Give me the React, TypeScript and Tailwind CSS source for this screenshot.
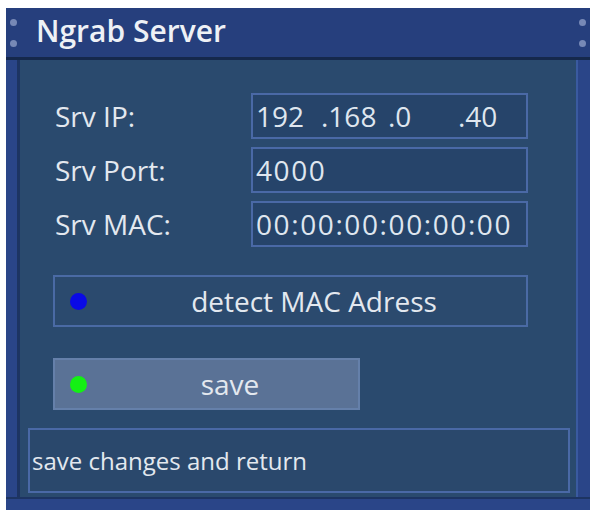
const font = { fontFamily: '"Open Sans", "DejaVu Sans", sans-serif' };

const TitleDots = () => (
  <div className="flex flex-col gap-[14px]">
    <span className="block w-[7px] h-[7px] rounded-full bg-[#8c9cc4] opacity-80" />
    <span className="block w-[7px] h-[7px] rounded-full bg-[#8c9cc4] opacity-80" />
  </div>
);

const Field = ({ children }: { children: React.ReactNode }) => (
  <div className="w-[277px] h-[46px] border-2 border-[#4a69a6] bg-[#26446a] flex items-center pl-[3px] text-[28px] tracking-[1.6px] text-[#dfe6ef] leading-none">
    {children}
  </div>
);

const ColorButton = ({
  dot,
  label,
  className,
}: {
  dot: string;
  label: string;
  className: string;
}) => (
  <div className={`h-[52px] ml-[33px] border-2 flex items-center ${className}`}>
    <span className={`ml-[15px] w-[17px] h-[17px] rounded-full ${dot}`} />
    <span className="flex-1 text-center pl-[15px] text-[28px] leading-none text-[#e3e8ef]">
      {label}
    </span>
  </div>
);

export default function App() {
  const rows = [
    { label: 'Srv IP:', value: null },
    { label: 'Srv Port:', value: '4000' },
    { label: 'Srv MAC:', value: '00:00:00:00:00:00' },
  ];

  return (
    <div className="w-[593px] h-[515px] bg-white pt-[8px] pl-[6px] font-medium" style={font}>
      <div className="w-[584px] h-[502px] bg-[#2a4588] flex flex-col">
        {/* title bar */}
        <div className="h-[49px] bg-[#263f7d] flex items-center px-[4px]">
          <TitleDots />
          <span className="ml-[19px] text-[30px] font-semibold leading-none text-[#eef1f6] pb-[4px]">
            Ngrab Server
          </span>
          <div className="flex-1" />
          <TitleDots />
        </div>
        <div className="h-[3px] bg-[#15284c]" />

        <div className="flex h-[437px]">
          <div className="w-[14px] bg-[#2a4588] border-r-[3px] border-[#1d3462]" />
          <div className="w-[556px] bg-[#2a4a6e] flex flex-col pt-[33px]">
            <div className="flex flex-col gap-[8px]">
              {rows.map((row) => (
                <div key={row.label} className="flex items-center">
                  <span className="ml-[35px] w-[196px] text-[28px] leading-none text-[#e3e8ef]">
                    {row.label}
                  </span>
                  <Field>
                    {row.value ?? (
                      <>
                        <span className="inline-block w-[65px] tracking-normal">192</span>
                        <span className="inline-block w-[67px] tracking-normal">.168</span>
                        <span className="inline-block w-[70px] tracking-normal">.0</span>
                        <span className="inline-block tracking-normal">.40</span>
                      </>
                    )}
                  </Field>
                </div>
              ))}
            </div>

            <div className="mt-[28px]">
              <ColorButton
                dot="bg-[#0a0ae6]"
                label="detect MAC Adress"
                className="w-[475px] bg-[#2b4a6e] border-[#4a6aa4]"
              />
            </div>
            <div className="mt-[31px]">
              <ColorButton
                dot="bg-[#14f014]"
                label="save"
                className="w-[307px] bg-[#5a7296] border-[#6580aa]"
              />
            </div>

            <div className="mt-[18px] ml-[8px] w-[542px] h-[65px] border-2 border-[#4a69a6] bg-[#2a486c] flex items-center pl-[2px]">
              <span className="text-[24px] leading-none text-[#e3e8ef]">save changes and return</span>
            </div>
          </div>
          <div className="w-[14px] bg-[#2a4588] border-l-[2px] border-[#3a5aa0]" />
        </div>
        <div className="h-[13px] bg-[#2a4588] border-t-[2px] border-[#1d3462]" />
      </div>
    </div>
  );
}
